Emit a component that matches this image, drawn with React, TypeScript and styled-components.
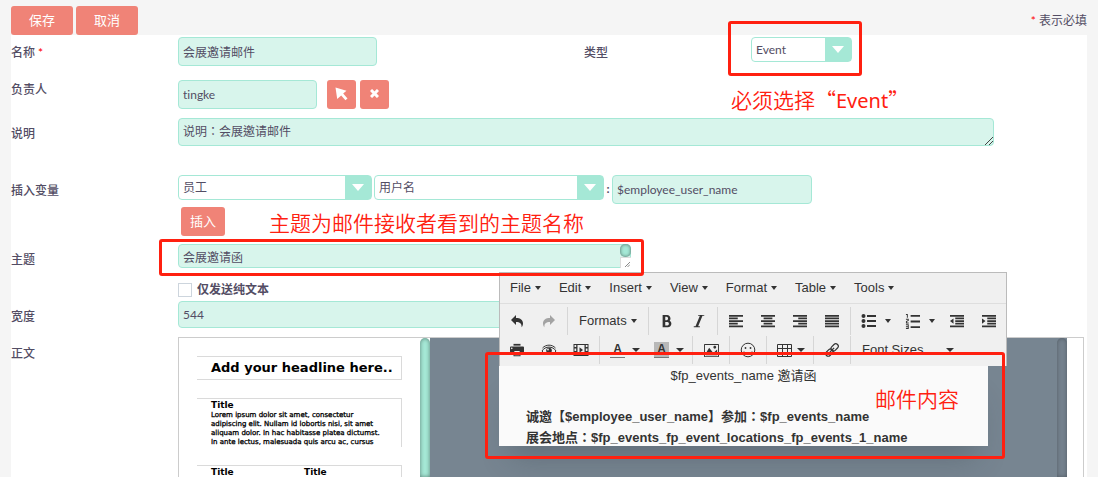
import React from "react";
import styled, { createGlobalStyle, css } from "styled-components";
import {
  ImBold,
  ImImage,
  ImItalic,
  ImIndentDecrease,
  ImIndentIncrease,
  ImListNumbered,
  ImParagraphCenter,
  ImParagraphJustify,
  ImParagraphLeft,
  ImParagraphRight,
  ImPrinter,
} from "react-icons/im";

const color = {
  page: "#f5f5f5",
  text: "#534d64",
  coral: "#f08377",
  mint: "#a5e8d6",
  mintSoft: "#d8f5ec",
  slate: "#778591",
  mark: "#ff2010",
  frame: "#cccccc",
  tool: "#f0f0f0",
  ink: "#333333",
};

const GlobalStyle = createGlobalStyle`
  *, *::before, *::after { box-sizing: border-box; }
  body {
    margin: 0;
    background: ${color.page};
    color: ${color.text};
    font: 12px/18px Lato, "Noto Sans CJK SC", sans-serif;
    font-variant-ligatures: none;
  }
  button, input, select, textarea {
    font: inherit;
    font-variant-ligatures: none;
    color: inherit;
    margin: 0;
  }
`;

const Page = styled.div`
  position: relative;
  display: flex;
  flex-direction: column;
  height: 100vh;
  min-height: 440px;
  padding: 0 11px;
  overflow: hidden;
`;

const ActionBar = styled.header`
  display: flex;
  align-items: flex-end;
  gap: 3px;
  height: 35px;
  flex: none;
`;

const Button = styled.button<{ $pad?: number; $square?: boolean }>`
  display: inline-flex;
  align-items: center;
  justify-content: center;
  height: 29px;
  padding: 0 ${(p) => p.$pad ?? 0}px 2px;
  ${(p) => p.$square && css`width: 29px;`}
  border: 0;
  border-radius: 3px;
  background: ${color.coral};
  color: #fff;
  font-size: 13px;
`;

const RequiredNote = styled.p`
  margin: 0 0 0 auto;
  padding-bottom: 5px;
`;

const Star = styled.span`
  color: #f00;
`;

const Form = styled.form`
  position: relative;
  display: flex;
  flex-direction: column;
  flex: 1;
  min-height: 0;
  background: #fff;
`;

const Row = styled.div<{ $h: number }>`
  display: flex;
  flex: none;
  align-items: flex-start;
  min-height: ${(p) => p.$h}px;
`;

const EditorRow = styled(Row)`
  flex: 1;
  align-items: stretch;
  min-height: 0;
`;

const Label = styled.label<{ $raised?: boolean }>`
  flex: none;
  width: 167px;
  padding-top: ${(p) => (p.$raised ? 3 : 9)}px;
  font-weight: 500;
`;

const Field = styled.div<{ $w?: number; $indent?: number }>`
  display: flex;
  align-items: flex-start;
  padding: 2px 0 0 ${(p) => p.$indent ?? 0}px;
  ${(p) => (p.$w ? css`width: ${p.$w}px;` : css`flex: 1;`)}
`;

const Inline = styled.div<{ $gap: number; $after: number }>`
  display: flex;
  flex: none;
  align-items: flex-start;
  gap: ${(p) => p.$gap}px;
  padding-right: ${(p) => p.$after}px;
`;

const box = css`
  border: 1px solid ${color.mint};
  border-radius: 4px;
  background: ${color.mintSoft};
`;

const TextInput = styled.input<{ $w: number; $h?: number }>`
  ${box}
  width: 100%;
  max-width: ${(p) => p.$w}px;
  height: ${(p) => p.$h ?? 29}px;
  padding: 0 4px 1px;
`;

const OwnerInput = styled(TextInput)`
  width: 139px;
`;

const AreaWrap = styled.div<{ $w: number; $h: number }>`
  position: relative;
  width: 100%;
  max-width: ${(p) => p.$w}px;
  height: ${(p) => p.$h}px;
`;

const TextArea = styled.textarea`
  ${box}
  display: block;
  width: 100%;
  height: 100%;
  padding: 4px;
  resize: none;
  overflow: hidden;
`;

const DescriptionArea = styled(TextArea)`
  font-family: Lato, "Noto Sans CJK TC", sans-serif;
`;

const Grip = styled.svg`
  position: absolute;
  right: 1px;
  bottom: 1px;
`;

const AreaScroll = styled.span`
  position: absolute;
  top: 0;
  right: 0;
  display: flex;
  flex-direction: column;
  width: 11px;
  height: 100%;
`;

const Thumb = styled.span`
  flex: 1;
  border-radius: 5px;
  background: ${color.mint};
  box-shadow: inset 0 0 3px 1px rgba(0, 0, 0, 0.35);
`;

const Corner = styled.span`
  height: 11px;
  border: 1px solid #dcdcdc;
  border-width: 1px 0 0 1px;
  background: #fff;
`;

const SelectWrap = styled.span<{ $w: number }>`
  position: relative;
  display: flex;
  flex: none;
  width: ${(p) => p.$w}px;
  height: 25px;
  border: 1px solid ${color.mint};
  border-radius: 4px;
  background: linear-gradient(to left, ${color.mint} 26px, #fff 26px);

  &::after {
    content: "";
    position: absolute;
    right: 7px;
    top: 8px;
    border: 6px solid transparent;
    border-width: 7px 6px 0;
    border-top-color: #fff;
    pointer-events: none;
  }
`;

const Select = styled.select`
  width: 100%;
  padding: 0 30px 0 4px;
  border: 0;
  background: transparent;
  appearance: none;
`;

const Colon = styled.span`
  width: 4px;
  padding-top: 5px;
  text-align: center;
  font-weight: 700;
`;

const CheckBox = styled.input`
  appearance: none;
  width: 14px;
  height: 14px;
  margin: 2px 5px 0 0;
  border: 1px solid #cdd5dd;
  background: #fff;
`;

const CheckLabel = styled.label`
  font-weight: 700;
`;

const Editor = styled.div`
  display: flex;
  flex: 1;
  margin: 1px 3px 0 0;
  border: 1px solid ${color.frame};
  border-bottom: 0;
  overflow: hidden;
`;

const Blocks = styled.div`
  display: flex;
  flex-direction: column;
  gap: 18px;
  width: 241px;
  padding: 18px 18px 0;
  color: #000;
  font-family: "DejaVu Sans", sans-serif;
`;

const BlockCard = styled.div<{ $h: number; $open?: boolean }>`
  flex: none;
  height: ${(p) => p.$h}px;
  padding-left: 14px;
  border: 1px solid #dadada;
  border-left: 0;
  ${(p) => p.$open && css`border-bottom: 0;`}
  overflow: hidden;
  white-space: nowrap;
`;

const Headline = styled.div`
  font: bold 13px/22px "DejaVu Sans", sans-serif;
`;

const Columns = styled.div`
  display: grid;
  grid-template-columns: 93px 1fr;
`;

const BlockTitle = styled.div`
  font: bold 9px/12px "DejaVu Sans", sans-serif;
`;

const BlockText = styled.div`
  font: 7px/9px "DejaVu Sans", sans-serif;
  -webkit-text-stroke: 0.3px #000;
`;

const ListScroll = styled.div`
  width: 10px;
  border-radius: 5px 5px 0 0;
  background: ${color.mint};
  box-shadow: inset 0 0 4px rgba(0, 0, 0, 0.45);
`;

const Canvas = styled.div`
  display: flex;
  justify-content: flex-end;
  flex: 1;
  margin-right: 16px;
  background: ${color.slate};
`;

const CanvasScroll = styled(ListScroll)`
  background: #75828e;
  box-shadow: inset 0 0 4px rgba(0, 0, 0, 0.3);
`;

const Floating = styled.div`
  position: absolute;
  left: 488px;
  top: 237px;
  width: 508px;
  color: ${color.ink};
  font: 13px/20px "Liberation Sans", "Noto Sans CJK SC", sans-serif;
`;

const ToolPanel = styled.div`
  border: 1px solid #bbb;
  border-bottom: 0;
  background: ${color.tool};
`;

const MenuBar = styled.div`
  display: flex;
  height: 31px;
  padding-left: 1px;
  border-bottom: 1px solid #dedede;
`;

const Tools = styled.div`
  display: flex;
  flex-direction: column;
  gap: 1px;
  padding: 3px 0 2px 1px;
`;

const ToolRow = styled.div`
  display: flex;
  height: 28px;
`;

const Group = styled.div`
  display: flex;
  padding: 0 2px;
  border-left: 1px solid #d6d6d6;

  &:first-child {
    padding-left: 0;
    border-left: 0;
  }
`;

const ToolButton = styled.button<{ $w?: number; $dim?: boolean }>`
  display: inline-flex;
  align-items: center;
  justify-content: ${(p) => (p.$w ? "space-between" : "center")};
  gap: 4px;
  min-width: ${(p) => p.$w ?? 32}px;
  padding: 0 ${(p) => (p.$w ? 6 : 8)}px 0 8px;
  border: 0;
  background: none;
  opacity: ${(p) => (p.$dim ? 0.4 : 1)};

  svg { display: block; flex: none; }
`;

const TextButton = styled(ToolButton)`
  padding: 0 9px;
`;

const Caret = styled.i<{ $big?: boolean }>`
  border: ${(p) => (p.$big ? 4 : 3)}px solid transparent;
  border-top: 4px solid ${color.ink};
  border-bottom: 0;
`;

const Letter = styled.span<{ $filled?: boolean }>`
  width: 15px;
  height: 16px;
  background: ${(p) => (p.$filled ? "#b8b8b8" : "transparent")};
  border-bottom: 1px solid #777;
  font: bold 12px/15px "Liberation Sans", sans-serif;
  text-align: center;
`;

const Mail = styled.article`
  width: 489px;
  height: 80px;
  padding: 0 27px;
  background: #fafafa;
  box-shadow: 0 24px 30px -12px rgba(50, 60, 70, 0.3);
`;

const MailTitle = styled.p`
  margin: 0 0 20px;
  text-align: center;
`;

const MailLine = styled.p`
  margin: 0;
  font-weight: 700;
  white-space: nowrap;
`;

const CenteredColon = styled.span`
  font-family: "Noto Sans CJK TC", sans-serif;
`;

const Mark = styled.div<{ $x: number; $y: number; $w: number; $h: number }>`
  position: absolute;
  left: ${(p) => p.$x}px;
  top: ${(p) => p.$y}px;
  width: ${(p) => p.$w}px;
  height: ${(p) => p.$h}px;
  border: 3px solid ${color.mark};
  border-radius: 3px;
  pointer-events: none;
`;

const Note = styled.p<{ $x: number; $y: number }>`
  position: absolute;
  left: ${(p) => p.$x}px;
  top: ${(p) => p.$y}px;
  margin: 0;
  color: ${color.mark};
  font: 350 21px/30px "Noto Sans CJK SC", sans-serif;
  white-space: nowrap;
  pointer-events: none;
`;

const Latin = styled.span`
  font-family: "Noto Sans", sans-serif;
  font-weight: 400;
  font-size: 20px;
`;

const GripIcon = ({ size = 8 }: { size?: number }) => (
  <Grip width={size} height={size} viewBox="0 0 8 8" stroke="#444" fill="none">
    <path d="M0 8L8 0M4 8L8 4" />
  </Grip>
);

const PointerIcon = () => (
  <svg width="13" height="14" viewBox="0 0 13 14" fill="#fff">
    <path d="M0.5 0.5L11.5 3.8L8.2 6.6L12.5 11.5L10.4 13.3L6.2 8.6L2.2 12Z" />
  </svg>
);

const CrossIcon = () => (
  <svg width="9" height="9" viewBox="0 0 9 9" stroke="#fff" strokeWidth="3">
    <path d="M1 1L8 8M8 1L1 8" />
  </svg>
);

const UndoIcon = ({ flip = false }: { flip?: boolean }) => (
  <svg width="14" height="14" viewBox="0 0 14 14" fill={color.ink}>
    <path
      transform={flip ? "matrix(-1 0 0 1 14 0)" : undefined}
      d="M6 1V4C10.500 4 13 6 13 9.500C13 11 12.500 12.300 11.600 13.300C11.800 9.500 10 8 6 8V11L1 6Z"
    />
  </svg>
);

const BulletIcon = () => (
  <svg width="16" height="16" viewBox="0 0 16 16" fill={color.ink}>
    <circle cx="2.500" cy="3" r="2" />
    <circle cx="2.500" cy="8" r="2" />
    <circle cx="2.500" cy="13" r="2" />
    <path d="M6 2H15V4H6ZM6 7H15V9H6ZM6 12H15V14H6Z" />
  </svg>
);

const EyeIcon = () => (
  <svg width="16" height="16" viewBox="0 0 16 16" fill="none" stroke={color.ink}>
    <path d="M1 9C4 3.800 12 3.800 15 9C12 13.600 4 13.600 1 9Z" />
    <path d="M1.500 6C5 2.200 11 2.200 14.500 6" />
    <circle cx="8" cy="8.500" r="2.800" fill={color.ink} stroke="none" />
    <circle cx="7" cy="7.500" r="0.900" fill={color.tool} stroke="none" />
  </svg>
);

const MediaIcon = () => (
  <svg width="16" height="14" viewBox="0 0 16 14" fill={color.ink}>
    <path
      fillRule="evenodd"
      d="M0.500 1H15.500V13H0.500ZM1.500 2V4H3.200V2ZM1.500 5.500V8H3.200V5.500ZM1.500 9.500V12H3.200V9.500ZM12.800 2V4H14.500V2ZM12.800 5.500V8H14.500V5.500ZM12.800 9.500V12H14.500V9.500ZM4.500 2V12H11.500V2Z"
    />
    <path d="M6.500 4.300L10 7L6.500 9.700Z" />
  </svg>
);

const SmileIcon = () => (
  <svg width="16" height="16" viewBox="0 0 16 16" fill="none" stroke={color.ink}>
    <circle cx="8" cy="8" r="6.800" />
    <path d="M4 9.500C5.500 13 10.500 13 12 9.500" />
    <circle cx="5.500" cy="6" r="0.900" fill={color.ink} stroke="none" />
    <circle cx="10.500" cy="6" r="0.900" fill={color.ink} stroke="none" />
  </svg>
);

const TableIcon = () => (
  <svg width="15" height="13" viewBox="0 0 15 13" fill="none" stroke={color.ink}>
    <path d="M0.500 0.500H14.500V12.500H0.500ZM0.500 4.500H14.500M0.500 8.500H14.500M5.500 0.500V12.500M10.500 0.500V12.500" />
  </svg>
);

const LinkIcon = () => (
  <svg width="16" height="16" viewBox="0 0 16 16" fill="none" stroke={color.ink} strokeWidth="1.200">
    <g transform="rotate(-45 8 8)">
      <rect x="0.200" y="5.500" width="8.300" height="5" rx="2.500" />
      <rect x="7.500" y="5.500" width="8.300" height="5" rx="2.500" />
      <path d="M5 8H11" />
    </g>
  </svg>
);

const menus = ["File", "Edit", "Insert", "View", "Format", "Table", "Tools"];

const Tool = ({ name, children, dim }: { name: string; children: React.ReactNode; dim?: boolean }) => (
  <ToolButton type="button" aria-label={name} $dim={dim}>
    {children}
  </ToolButton>
);

type SplitProps = { name: string; w?: number; big?: boolean; children: React.ReactNode };

const SplitTool = ({ name, w = 44, big, children }: SplitProps) => (
  <ToolButton type="button" aria-label={name} $w={w}>
    {children}
    <Caret $big={big} />
  </ToolButton>
);

const Toolbar = () => (
  <ToolPanel>
    <MenuBar>
      {menus.map((m) => (
        <TextButton type="button" key={m}>
          {m}
          <Caret />
        </TextButton>
      ))}
    </MenuBar>
    <Tools>
      <ToolRow>
        <Group>
          <Tool name="Undo"><UndoIcon /></Tool>
          <Tool name="Redo" dim><UndoIcon flip /></Tool>
        </Group>
        <Group>
          <TextButton type="button">Formats<Caret /></TextButton>
        </Group>
        <Group>
          <Tool name="Bold"><ImBold size={14} /></Tool>
          <Tool name="Italic"><ImItalic size={14} /></Tool>
        </Group>
        <Group>
          <Tool name="Align left"><ImParagraphLeft size={14} /></Tool>
          <Tool name="Align center"><ImParagraphCenter size={14} /></Tool>
          <Tool name="Align right"><ImParagraphRight size={14} /></Tool>
          <Tool name="Justify"><ImParagraphJustify size={14} /></Tool>
        </Group>
        <Group>
          <SplitTool name="Bullet list"><BulletIcon /></SplitTool>
          <SplitTool name="Numbered list"><ImListNumbered size={15} /></SplitTool>
          <Tool name="Decrease indent"><ImIndentDecrease size={14} /></Tool>
          <Tool name="Increase indent"><ImIndentIncrease size={14} /></Tool>
        </Group>
      </ToolRow>
      <ToolRow>
        <Group>
          <Tool name="Print"><ImPrinter size={14} /></Tool>
          <Tool name="Preview"><EyeIcon /></Tool>
          <Tool name="Media"><MediaIcon /></Tool>
        </Group>
        <Group>
          <SplitTool name="Text color" big><Letter>A</Letter></SplitTool>
          <SplitTool name="Background color" big><Letter $filled>A</Letter></SplitTool>
        </Group>
        <Group>
          <Tool name="Image"><ImImage size={15} /></Tool>
        </Group>
        <Group>
          <Tool name="Emoticons"><SmileIcon /></Tool>
        </Group>
        <Group>
          <SplitTool name="Table" w={42} big><TableIcon /></SplitTool>
        </Group>
        <Group>
          <Tool name="Link"><LinkIcon /></Tool>
        </Group>
        <Group>
          <TextButton type="button" $w={110}>Font Sizes<Caret $big /></TextButton>
        </Group>
      </ToolRow>
    </Tools>
  </ToolPanel>
);

export default function App() {
  return (
    <Page lang="zh-CN">
      <GlobalStyle />
      <ActionBar>
        <Button type="submit" form="template" $pad={18}>保存</Button>
        <Button type="button" $pad={18}>取消</Button>
        <RequiredNote><Star>*</Star> 表示必填</RequiredNote>
      </ActionBar>

      <Form id="template">
        <Row $h={43}>
          <Label htmlFor="name">名称 <Star>*</Star></Label>
          <Field $w={406}><TextInput id="name" $w={199} defaultValue="会展邀请邮件" /></Field>
          <Label htmlFor="type">类型</Label>
          <Field>
            <SelectWrap $w={101}>
              <Select id="type"><option>Event</option></Select>
            </SelectWrap>
          </Field>
        </Row>

        <Row $h={38}>
          <Label htmlFor="owner" $raised>负责人</Label>
          <Field>
            <Inline $gap={0} $after={10}><OwnerInput id="owner" $w={139} defaultValue="tingke" /></Inline>
            <Inline $gap={4} $after={0}>
              <Button type="button" aria-label="选择" $square><PointerIcon /></Button>
              <Button type="button" aria-label="清除" $square><CrossIcon /></Button>
            </Inline>
          </Field>
        </Row>

        <Row $h={57}>
          <Label htmlFor="desc">说明</Label>
          <Field>
            <AreaWrap $w={816} $h={28}>
              <DescriptionArea id="desc" lang="zh-TW" defaultValue="说明：会展邀请邮件" />
              <GripIcon />
            </AreaWrap>
          </Field>
        </Row>

        <Row $h={32}>
          <Label htmlFor="module">插入变量</Label>
          <Field>
            <Inline $gap={2} $after={2}>
              <SelectWrap $w={194}>
                <Select id="module"><option>员工</option></Select>
              </SelectWrap>
              <SelectWrap $w={230}>
                <Select aria-label="变量"><option>用户名</option></Select>
              </SelectWrap>
              <Colon>:</Colon>
            </Inline>
            <TextInput aria-label="变量名" $w={200} defaultValue="$employee_user_name" />
          </Field>
        </Row>

        <Row $h={37}>
          <Label as="span" />
          <Field $indent={3}><Button type="button" $pad={9}>插入</Button></Field>
        </Row>

        <Row $h={37}>
          <Label htmlFor="subject">主题</Label>
          <Field>
            <AreaWrap $w={453} $h={24}>
              <TextArea id="subject" defaultValue="会展邀请函" />
              <AreaScroll><Thumb /><Corner /></AreaScroll>
              <GripIcon size={5} />
            </AreaWrap>
          </Field>
        </Row>

        <Row $h={20}>
          <Label as="span" />
          <Field>
            <CheckBox id="plain" type="checkbox" />
            <CheckLabel htmlFor="plain">仅发送纯文本</CheckLabel>
          </Field>
        </Row>

        <Row $h={37}>
          <Label htmlFor="width">宽度</Label>
          <Field><TextInput id="width" $w={816} $h={27} defaultValue="544" /></Field>
        </Row>

        <EditorRow $h={0}>
          <Label as="span">正文</Label>
          <Editor>
            <Blocks>
              <BlockCard $h={24}><Headline>Add your headline here..</Headline></BlockCard>
              <BlockCard $h={49} $open>
                <BlockTitle>Title</BlockTitle>
                <BlockText>
                  Lorem ipsum dolor sit amet, consectetur<br />
                  adipiscing elit. Nullam id lobortis nisi, sit amet<br />
                  aliquam dolor. In hac habitasse platea dictumst.<br />
                  In ante lectus, malesuada quis arcu ac, cursus
                </BlockText>
              </BlockCard>
              <BlockCard $h={49} $open>
                <Columns>
                  <BlockTitle>Title</BlockTitle>
                  <BlockTitle>Title</BlockTitle>
                </Columns>
              </BlockCard>
            </Blocks>
            <ListScroll />
            <Canvas><CanvasScroll /></Canvas>
          </Editor>
        </EditorRow>

        <Floating>
          <Toolbar />
          <Mail>
            <MailTitle>$fp_events_name 邀请函</MailTitle>
            <MailLine>诚邀【$employee_user_name】参加<CenteredColon lang="zh-TW">：</CenteredColon>$fp_events_name</MailLine>
            <MailLine>展会地点<CenteredColon lang="zh-TW">：</CenteredColon>$fp_events_fp_event_locations_fp_events_1_name</MailLine>
          </Mail>
        </Floating>
      </Form>

      <Mark $x={728} $y={21} $w={134} $h={55} />
      <Note $x={731} $y={84}>必须选择“<Latin>Event</Latin>”</Note>
      <Note $x={269} $y={207}>主题为邮件接收者看到的主题名称</Note>
      <Mark $x={159} $y={239} $w={485} $h={37} />
      <Mark $x={485} $y={352} $w={520} $h={107} />
      <Note $x={875} $y={383}>邮件内容</Note>
    </Page>
  );
}
